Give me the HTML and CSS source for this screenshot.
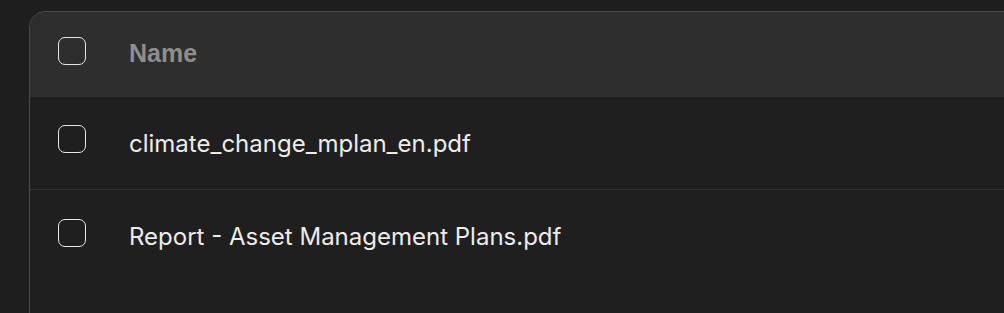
FILE: index.html
```html
<!DOCTYPE html>
<html>
<head>
<meta charset="utf-8">
<link rel="stylesheet" href="styles.css">
</head>
<body>
<div class="page">
  <div class="card">
    <div class="row head">
      <span class="check"></span>
      <span class="label">Name</span>
    </div>
    <div class="row item">
      <span class="check"></span>
      <span class="file">climate_change_mplan_en.pdf</span>
    </div>
    <div class="row item last">
      <span class="check"></span>
      <span class="file">Report - Asset Management Plans.pdf</span>
    </div>
  </div>
</div>
</body>
</html>
```
FILE: styles.css
```css
html, body {
  margin: 0;
  padding: 0;
  background: #1e1e1e;
  overflow: hidden;
  width: 1004px;
  height: 313px;
}
.page {
  padding: 11px 0 0 29px;
}
.card {
  width: 1100px;
  height: 400px;
  border: 1px solid #4d4d4d;
  border-radius: 16px 16px 0 0;
  background: #1f1f1f;
  overflow: hidden;
}
.row {
  display: flex;
  align-items: center;
  padding-left: 28px;
  box-sizing: border-box;
}
.head {
  height: 85px;
  background: #2e2e2f;
}
.item {
  height: 93px;
  border-bottom: 1px solid #333334;
}
.item.last {
  border-bottom: none;
}
.check {
  flex: none;
  width: 28px;
  height: 28px;
  box-sizing: border-box;
  border: 1.5px solid #e6e6e6;
  border-radius: 7px;
  margin-right: 43px;
  margin-bottom: 8px;
}
.label {
  font-family: "Liberation Sans", Arial, sans-serif;
  font-weight: bold;
  font-size: 25px;
  color: #8e8e8e;
  margin-bottom: 2px;
}
.file {
  font-family: Inter, "Liberation Sans", sans-serif;
  font-size: 24px;
  color: #ececec;
}
```
